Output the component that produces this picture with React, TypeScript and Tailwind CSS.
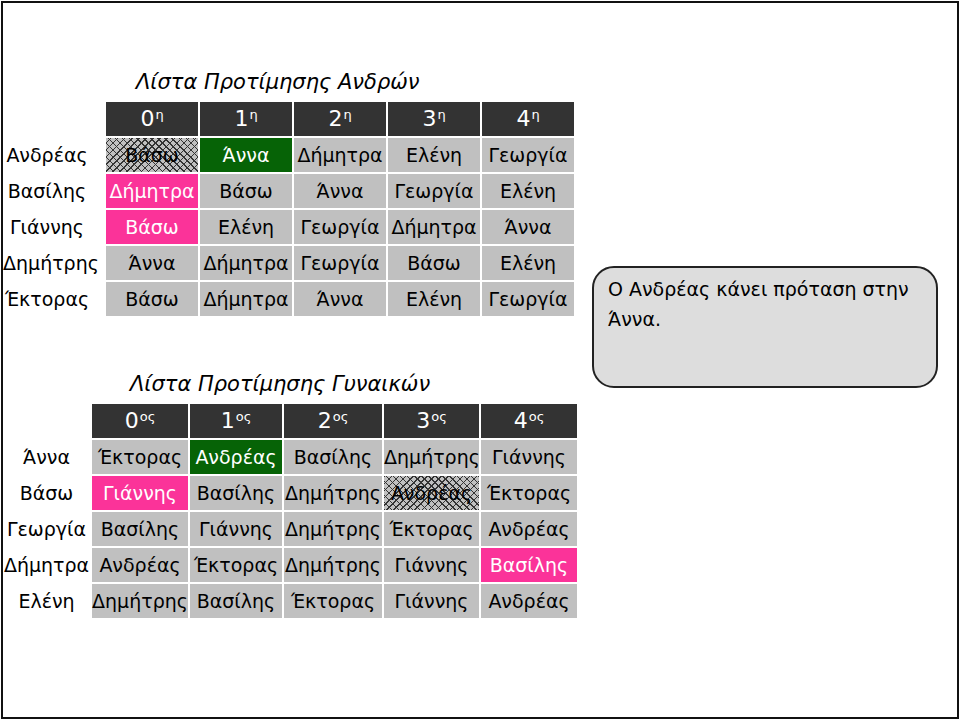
type Tone = "plain" | "green" | "pink" | "hatch";

const FONT = "font-['DejaVu_Sans',sans-serif]";

// men's list: row label + 5 cells, tone per cell
const menRows: { name: string; cells: [string, Tone][] }[] = [
  { name: "Ανδρέας", cells: [["Βάσω", "hatch"], ["Άννα", "green"], ["Δήμητρα", "plain"], ["Ελένη", "plain"], ["Γεωργία", "plain"]] },
  { name: "Βασίλης", cells: [["Δήμητρα", "pink"], ["Βάσω", "plain"], ["Άννα", "plain"], ["Γεωργία", "plain"], ["Ελένη", "plain"]] },
  { name: "Γιάννης", cells: [["Βάσω", "pink"], ["Ελένη", "plain"], ["Γεωργία", "plain"], ["Δήμητρα", "plain"], ["Άννα", "plain"]] },
  { name: "Δημήτρης", cells: [["Άννα", "plain"], ["Δήμητρα", "plain"], ["Γεωργία", "plain"], ["Βάσω", "plain"], ["Ελένη", "plain"]] },
  { name: "Έκτορας", cells: [["Βάσω", "plain"], ["Δήμητρα", "plain"], ["Άννα", "plain"], ["Ελένη", "plain"], ["Γεωργία", "plain"]] },
];

const womenRows: { name: string; cells: [string, Tone][] }[] = [
  { name: "Άννα", cells: [["Έκτορας", "plain"], ["Ανδρέας", "green"], ["Βασίλης", "plain"], ["Δημήτρης", "plain"], ["Γιάννης", "plain"]] },
  { name: "Βάσω", cells: [["Γιάννης", "pink"], ["Βασίλης", "plain"], ["Δημήτρης", "plain"], ["Ανδρέας", "hatch"], ["Έκτορας", "plain"]] },
  { name: "Γεωργία", cells: [["Βασίλης", "plain"], ["Γιάννης", "plain"], ["Δημήτρης", "plain"], ["Έκτορας", "plain"], ["Ανδρέας", "plain"]] },
  { name: "Δήμητρα", cells: [["Ανδρέας", "plain"], ["Έκτορας", "plain"], ["Δημήτρης", "plain"], ["Γιάννης", "plain"], ["Βασίλης", "pink"]] },
  { name: "Ελένη", cells: [["Δημήτρης", "plain"], ["Βασίλης", "plain"], ["Έκτορας", "plain"], ["Γιάννης", "plain"], ["Ανδρέας", "plain"]] },
];

const toneClass: Record<Tone, string> = {
  plain: "bg-[#c0c0c0] text-black",
  green: "bg-[#066306] text-white",
  pink: "bg-[#fb3399] text-white",
  hatch:
    "bg-[#c0c0c0] text-black bg-[image:repeating-linear-gradient(45deg,#333_0_1px,transparent_1px_5px),repeating-linear-gradient(-45deg,#333_0_1px,transparent_1px_5px)]",
};

function PrefTable({
  cols,
  suffix,
  rows,
}: {
  cols: string;
  suffix: string;
  rows: { name: string; cells: [string, Tone][] }[];
}) {
  return (
    <div className={`grid ${cols} gap-[2px] text-[19px] leading-[34px]`}>
      <div />
      {[0, 1, 2, 3, 4].map((n) => (
        <div key={n} className="h-[34px] bg-[#333333] text-center text-[22px] text-white">
          {n}
          <span className="ml-[1px] align-[7px] text-[13px] leading-none">{suffix}</span>
        </div>
      ))}
      {rows.map((r) => (
        <>
          <div key={r.name} className="h-[34px] whitespace-nowrap text-center">
            {r.name}
          </div>
          {r.cells.map(([t, tone], i) => (
            <div key={r.name + i} className={`h-[34px] whitespace-nowrap text-center ${toneClass[tone]}`}>
              {t}
            </div>
          ))}
        </>
      ))}
    </div>
  );
}

export default function App() {
  return (
    <div className={`h-[720px] w-[960px] bg-white p-[1px] ${FONT}`}>
      <div className="flex h-full border-2 border-[#111] bg-white">
        <div className="w-[580px] shrink-0">
          <div className="ml-[133px] mt-[65px] h-[28px] text-[21px] italic leading-[28px]">
            Λίστα Προτίμησης Ανδρών
          </div>
          <div className="mt-[6px]">
            <PrefTable
              cols="grid-cols-[101px_92px_92px_92px_92px_92px] [&>*:nth-child(6n+1)]:pr-[13px]"
              suffix="η"
              rows={menRows}
            />
          </div>
          <div className="ml-[127px] mt-[54px] h-[28px] text-[21px] italic leading-[28px]">
            Λίστα Προτίμησης Γυναικών
          </div>
          <div className="mt-[6px]">
            <PrefTable cols="grid-cols-[87px_96px_92px_98px_95px_96px]" suffix="ος" rows={womenRows} />
          </div>
        </div>
        <div className="ml-[9px] mt-[263px] h-[122px] w-[346px] rounded-[22px] border-2 border-[#222] bg-[#dddddd] px-[14px] pt-[6px] text-[19px] leading-[30px]">
          Ο Ανδρέας κάνει πρόταση στην Άννα.
        </div>
      </div>
    </div>
  );
}
